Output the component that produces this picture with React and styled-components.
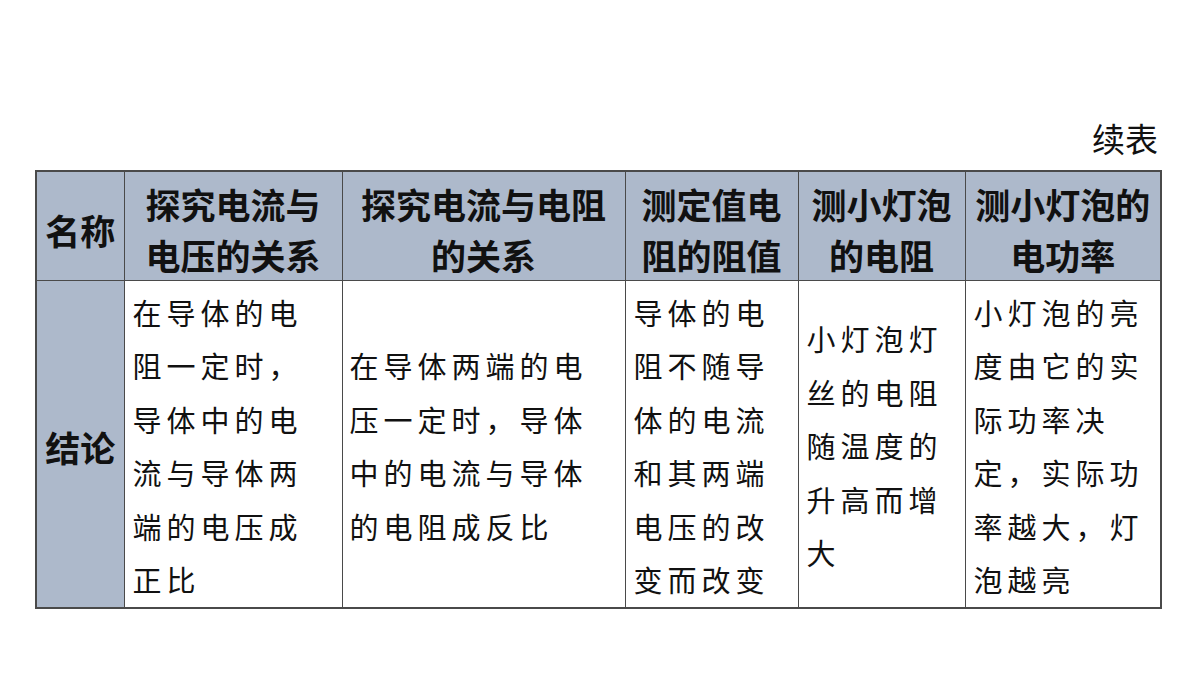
import React from "react"
import styled, { createGlobalStyle } from "styled-components"

const GlobalStyle = createGlobalStyle`
  html, body {
    margin: 0;
    padding: 0;
    background: #fff;
  }
`

const Page = styled.div`
  width: 1200px;
  height: 675px;
  box-sizing: border-box;
  padding: 120px 40px 0 35px;
  font-family: "Noto Sans CJK SC", "Noto Sans", sans-serif;
  color: #111;
`

const Caption = styled.div`
  text-align: right;
  font-size: 33px;
  line-height: 36px;
  height: 36px;
  margin-bottom: 14px;
  padding-right: 2px;
`

const Table = styled.table`
  width: 1125px;
  border-collapse: collapse;
  table-layout: fixed;
  border: 2px solid #4a4a4a;
`

const HeadCell = styled.th`
  background: #adb9cb;
  border: 1px solid #4a4a4a;
  font-weight: 700;
  font-size: 35px;
  line-height: 51px;
  text-align: center;
  vertical-align: middle;
  padding: ${p => p.pt}px 0 0;
  height: ${p => p.h}px;
  white-space: nowrap;
`

const BodyCell = styled.td`
  border: 1px solid #4a4a4a;
  font-size: 29px;
  line-height: 53.5px;
  letter-spacing: 5px;
  text-align: left;
  vertical-align: middle;
  padding: 4px 0 0 ${p => p.pl || 10}px;
  height: 322px;
  white-space: nowrap;
  font-weight: 400;
`

const widths = [88, 218, 283, 173, 167, 196]

const headers = [
  ["探究电流与", "电压的关系"],
  ["探究电流与电阻", "的关系"],
  ["测定值电", "阻的阻值"],
  ["测小灯泡", "的电阻"],
  ["测小灯泡的", "电功率"],
]

const bodies = [
  { pl: 8, lines: ["在导体的电", "阻一定时，", "导体中的电", "流与导体两", "端的电压成", "正比"] },
  { pl: 7, lines: ["在导体两端的电", "压一定时，导体", "中的电流与导体", "的电阻成反比"] },
  { pl: 8, lines: ["导体的电", "阻不随导", "体的电流", "和其两端", "电压的改", "变而改变"] },
  { pl: 8, lines: ["小灯泡灯", "丝的电阻", "随温度的", "升高而增", "大"] },
  { pl: 8, lines: ["小灯泡的亮", "度由它的实", "际功率决", "定，实际功", "率越大，灯", "泡越亮"] },
]

const Lines = ({ lines }) =>
  lines.map((l, i) => (
    <React.Fragment key={i}>
      {l}
      {i < lines.length - 1 && <br />}
    </React.Fragment>
  ))

export default function App() {
  return (
    <Page>
      <GlobalStyle />
      <Caption>续表</Caption>
      <Table>
        <colgroup>
          {widths.map((w, i) => <col key={i} style={{ width: w }} />)}
        </colgroup>
        <tbody>
          <tr>
            <HeadCell h={102} pt={6}>名称</HeadCell>
            {headers.map((h, i) => (
              <HeadCell key={i} h={102} pt={6}><Lines lines={h} /></HeadCell>
            ))}
          </tr>
          <tr>
            <HeadCell h={322} pt={4}>结论</HeadCell>
            {bodies.map((b, i) => (
              <BodyCell key={i} pl={b.pl}><Lines lines={b.lines} /></BodyCell>
            ))}
          </tr>
        </tbody>
      </Table>
    </Page>
  )
}
